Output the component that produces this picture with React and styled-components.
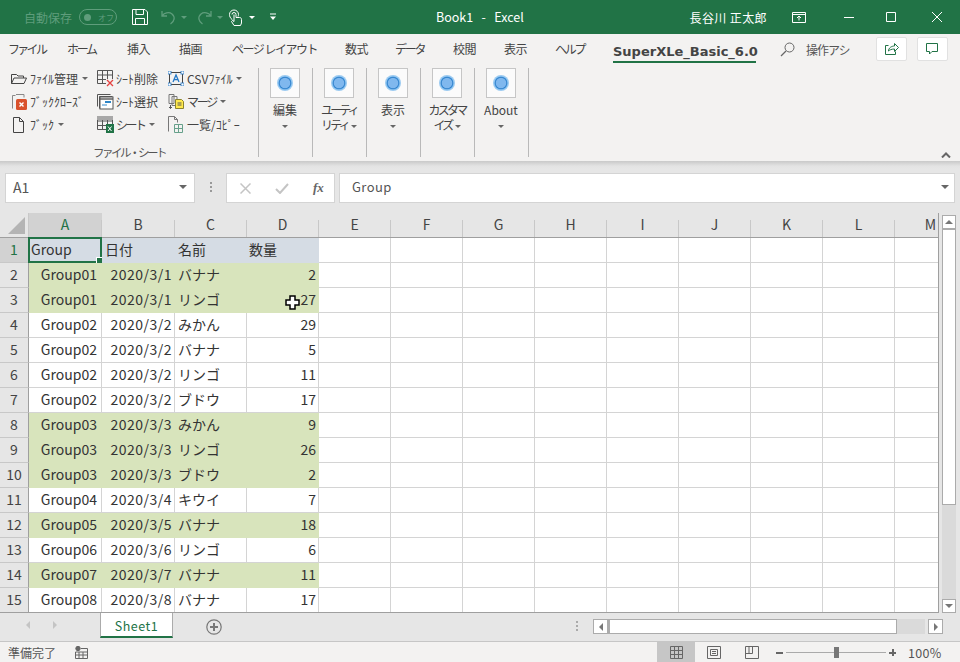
// App.jsx
import React from 'react';
import styled, { createGlobalStyle } from 'styled-components';

const JP = '"Noto Sans CJK JP", "Noto Sans", sans-serif';

const GlobalStyle = createGlobalStyle`
  html, body { margin: 0; padding: 0; background: #e6e6e6; }
  * { box-sizing: border-box; }
`;

const Window = styled.div`
  width: 960px;
  height: 662px;
  display: flex;
  flex-direction: column;
  overflow: hidden;
  font-family: ${JP};
  color: #444;
  position: relative;
`;

/* title bar */
const TitleBar = styled.div`
  height: 34px;
  flex: none;
  background: #217346;
  display: flex;
  align-items: center;
  color: #fff;
  font-size: 12px;
  position: relative;
`;

const AutoSave = styled.span`
  margin-left: 24px;
  width: 48px;
  color: #5f9d7c;
  font-size: 12px;
  white-space: nowrap;
`;

const Toggle = styled.span`
  width: 38px;
  height: 16px;
  margin-left: 7px;
  border: 1px solid #5f9d7c;
  border-radius: 8px;
  display: flex;
  align-items: center;
  color: #5f9d7c;
  font-size: 8px;
  padding-left: 4px;
  gap: 7px;
  &::before {
    content: '';
    width: 7px;
    height: 7px;
    border-radius: 50%;
    background: #5f9d7c;
  }
`;

const QuickIcon = styled.span`
  display: flex;
  margin-left: ${p => p.$ml}px;
  color: ${p => (p.$dim ? '#5f9d7c' : '#fff')};
`;

const TitleText = styled.span`
  position: absolute;
  left: 436px;
  top: 8px;
  font-size: 12.5px;
  line-height: 17px;
  white-space: pre;
`;

const UserName = styled.span`
  margin-left: auto;
  font-size: 12px;
  letter-spacing: 0.4px;
  white-space: nowrap;
`;

const WinButton = styled.span`
  display: flex;
  justify-content: center;
  width: 16px;
  margin-left: ${p => p.$ml}px;
  margin-right: ${p => p.$mr || 0}px;
`;

/* ribbon tabs */
const TabRow = styled.div`
  height: 30px;
  flex: none;
  background: #f3f2f1;
  display: flex;
  align-items: center;
  font-size: 12px;
  padding-left: 8px;
`;

const Tab = styled.span`
  width: ${p => p.$w}px;
  white-space: pre;
  letter-spacing: ${p => p.$ls || 0}px;
  line-height: 30px;
`;

const ActiveTab = styled.span`
  width: 143px;
  margin-right: 24px;
  height: 26px;
  margin-top: 2px;
  line-height: 30px;
  font-family: "DejaVu Sans", sans-serif;
  font-weight: 700;
  font-size: 13px;
  color: #444;
  border-bottom: 2px solid #217346;
  white-space: nowrap;
`;

const SearchHint = styled.span`
  width: 49px;
  margin-left: 11px;
  overflow: hidden;
  white-space: nowrap;
  letter-spacing: -1px;
  color: #555;
`;

const TabButton = styled.span`
  width: 31px;
  height: 24px;
  margin-left: ${p => p.$ml}px;
  background: #fff;
  border: 1px solid #e1e1e1;
  border-radius: 2px;
  display: flex;
  align-items: center;
  justify-content: center;
  color: #217346;
`;

/* ribbon body */
const Ribbon = styled.div`
  height: 97px;
  flex: none;
  background: #f3f2f1;
  display: flex;
  padding-top: 4px;
  position: relative;
`;

const FileGroup = styled.div`
  width: 259px;
  height: 89px;
  border-right: 1px solid #b9b9b9;
  display: flex;
  flex-direction: column;
  align-items: stretch;
`;

const SmallColumns = styled.div`
  display: flex;
  height: 69px;
`;

const SmallColumn = styled.div`
  width: ${p => p.$w}px;
  display: flex;
  flex-direction: column;
  padding-left: ${p => p.$pl}px;
`;

const SmallButton = styled.div`
  height: 23px;
  padding-bottom: 2px;
  display: flex;
  align-items: center;
  font-size: 12px;
  white-space: nowrap;
  color: #444;
  svg { flex: none; }
`;

const SmallLabel = styled.span`
  margin-left: ${p => p.$ml || 2}px;
  letter-spacing: ${p => p.$ls || 0}px;
`;

const Caret = styled.span`
  width: 0;
  height: 0;
  margin-left: ${p => (p.$ml === undefined ? 4 : p.$ml)}px;
  display: inline-block;
  vertical-align: middle;
  border-left: ${p => p.$size || 3}px solid transparent;
  border-right: ${p => p.$size || 3}px solid transparent;
  border-top: ${p => p.$size || 3}px solid ${p => p.$color || '#666'};
`;

const GroupLabel = styled.div`
  margin-top: 7px;
  text-align: center;
  font-size: 11.5px;
  letter-spacing: -2.5px;
  line-height: 16px;
  color: #555;
`;

const BigGroup = styled.div`
  width: 54px;
  height: 89px;
  border-right: 1px solid #b9b9b9;
  display: flex;
  flex-direction: column;
  align-items: center;
  padding-right: 1px;
`;

const BigIcon = styled.div`
  width: 30px;
  height: 30px;
  flex: none;
  background: #fbfbfb;
  border: 1px solid #c6c6c6;
  display: flex;
  align-items: center;
  justify-content: center;
`;

const BigLabel = styled.div`
  margin-top: 4px;
  font-size: 12px;
  line-height: 15px;
  text-align: center;
  white-space: nowrap;
  letter-spacing: ${p => p.$ls || 0}px;
`;

const Collapse = styled.span`
  position: absolute;
  right: 9px;
  bottom: 3px;
  display: flex;
  color: #666;
`;

/* formula bar */
const FormulaBar = styled.div`
  height: 52px;
  flex: none;
  display: flex;
  padding: 12px 5px 0;
  background: linear-gradient(#c9c9c9 0, #e3e3e3 5px, #e6e6e6 8px);
`;

const NameBox = styled.div`
  width: 190px;
  height: 30px;
  background: #fff;
  border: 1px solid #d4d4d4;
  display: flex;
  align-items: center;
  justify-content: space-between;
  padding: 0 7px 3px;
  font-size: 14px;
  color: #555;
`;

const Dots = styled.span`
  width: 2px;
  height: 10px;
  margin: 9px 14px 0 15px;
  background: repeating-linear-gradient(#999 0 2px, transparent 2px 4px);
`;

const FormulaButtons = styled.div`
  width: 109px;
  height: 30px;
  background: #fff;
  border: 1px solid #d4d4d4;
  display: flex;
  align-items: center;
  padding-left: 13px;
  gap: 24px;
`;

const FxLabel = styled.span`
  font-family: "Liberation Serif", serif;
  font-style: italic;
  font-weight: 700;
  font-size: 13px;
  color: #666;
`;

const FormulaInput = styled.div`
  width: 616px;
  height: 30px;
  margin-left: 4px;
  background: #fff;
  border: 1px solid #d4d4d4;
  display: flex;
  align-items: center;
  justify-content: space-between;
  padding: 0 5px 3px 12px;
  font-size: 13px;
  color: #555;
  letter-spacing: 0.4px;
`;

/* sheet */
const SheetArea = styled.div`
  height: 400px;
  flex: none;
  display: flex;
  background: #e6e6e6;
  overflow: hidden;
`;

const SheetGrid = styled.div`
  width: 939px;
  flex: none;
  overflow: hidden;
  background: #fff;
  border-right: 1px solid #9f9f9f;
  border-bottom: 1px solid #9f9f9f;
`;

const HeaderRow = styled.div`
  height: 25px;
  display: flex;
  background: #e6e6e6;
  border-bottom: 1px solid #9f9f9f;
`;

const Corner = styled.div`
  width: 29px;
  flex: none;
  display: flex;
  align-items: flex-end;
  justify-content: flex-end;
  padding: 0 3px 3px 0;
  border-right: 1px solid #c8c8c8;
`;

const ColHead = styled.div`
  width: ${p => p.$w}px;
  flex: none;
  text-align: center;
  font-size: 14px;
  line-height: 23px;
  background: ${p => (p.$on ? '#d2d2d2' : 'transparent')};
  color: ${p => (p.$on ? '#217346' : '#444')};
  border-right: 1px solid #c8c8c8;
  border-image: linear-gradient(transparent 30%, #c8c8c8 30%) 1;
`;

const SheetRow = styled.div`
  height: 25px;
  display: flex;
`;

const RowHead = styled.div`
  width: 29px;
  flex: none;
  text-align: center;
  font-size: 14px;
  line-height: 23px;
  background: ${p => (p.$on ? '#d2d2d2' : '#e6e6e6')};
  color: ${p => (p.$on ? '#217346' : '#444')};
  border-right: 1px solid #9f9f9f;
  border-bottom: 1px solid #c8c8c8;
`;

const Cell = styled.div`
  width: ${p => p.$w}px;
  flex: none;
  position: relative;
  font-size: 14px;
  line-height: 23px;
  padding: 0 ${p => p.$pr || 3}px 0 ${p => p.$pl || 3}px;
  white-space: nowrap;
  overflow: visible;
  letter-spacing: ${p => p.$ls || 0}px;
  text-align: ${p => p.$align || 'left'};
  color: #333;
  background: ${p => p.$bg || '#fff'};
  border-right: 1px solid ${p => (p.$bg ? 'transparent' : '#d4d4d4')};
  border-bottom: 1px solid ${p => (p.$bg ? 'transparent' : '#d4d4d4')};
`;

const Selection = styled.span`
  position: absolute;
  left: -1px;
  top: -1px;
  right: -1px;
  bottom: -1px;
  border: 2px solid #217346;
  &::after {
    content: '';
    position: absolute;
    right: -5px;
    bottom: -5px;
    width: 7px;
    height: 7px;
    background: #217346;
    border: 1px solid #fff;
  }
`;

const CursorMark = styled.span`
  position: absolute;
  left: 38px;
  top: 7px;
  display: flex;
`;

/* scroll bars */
const VScroll = styled.div`
  width: 21px;
  flex: none;
  padding: 2px 4px 0 3px;
  display: flex;
  flex-direction: column;
`;

const ScrollBtn = styled.div`
  width: ${p => p.$size || 14}px;
  height: ${p => p.$size || 14}px;
  flex: none;
  background: #fff;
  border: 1px solid #ababab;
  display: flex;
  align-items: center;
  justify-content: center;
`;

const VThumb = styled.div`
  height: 276px;
  flex: none;
  background: #fff;
  border: 1px solid #ababab;
`;

const VTrack = styled.div`
  flex: 1;
  background: #dadada;
`;

const Arrow = styled.span`
  width: 0;
  height: 0;
  border-style: solid;
  border-color: transparent;
  border-width: ${p => (p.$dir === 'up' ? '0 4px 4px' : p.$dir === 'down' ? '4px 4px 0' : '4px')};
  border-bottom-color: ${p => (p.$dir === 'up' ? '#777' : 'transparent')};
  border-top-color: ${p => (p.$dir === 'down' ? '#777' : 'transparent')};
  border-left-color: ${p => (p.$dir === 'right' ? '#777' : 'transparent')};
  border-right-color: ${p => (p.$dir === 'left' ? '#777' : 'transparent')};
  margin-left: ${p => (p.$dir === 'right' ? '4px' : 0)};
  margin-right: ${p => (p.$dir === 'left' ? '4px' : 0)};
`;

/* sheet tabs */
const SheetBar = styled.div`
  height: 28px;
  flex: none;
  display: flex;
  align-items: flex-start;
  background: #e6e6e6;
`;

const TabNav = styled.div`
  width: 100px;
  height: 24px;
  display: flex;
  align-items: center;
  padding-left: 26px;
  gap: 23px;
`;

const NavArrow = styled.span`
  width: 0;
  height: 0;
  border-style: solid;
  border-width: 4px 0;
  border-color: transparent;
  ${p => (p.$left
    ? 'border-right: 4px solid #c4c4c4;'
    : 'border-left: 4px solid #c4c4c4;')}
`;

const SheetTab = styled.div`
  width: 73px;
  height: 25px;
  background: #fff;
  border-left: 1px solid #ababab;
  border-right: 1px solid #ababab;
  border-bottom: 2px solid #217346;
  text-align: center;
  font-size: 12.5px;
  line-height: 25px;
  letter-spacing: 0.5px;
  color: #217346;
`;

const AddSheet = styled.span`
  display: flex;
  margin: 6px 0 0 33px;
`;

const TabDots = styled.span`
  width: 2px;
  height: 10px;
  margin: 8px 15px 0 354px;
  background: repeating-linear-gradient(#aaa 0 2px, transparent 2px 4px);
`;

const HScroll = styled.div`
  display: flex;
  margin-top: 6px;
  height: 15px;
`;

const HThumb = styled.div`
  width: 289px;
  height: 15px;
  background: #fff;
  border: 1px solid #ababab;
  border-left-width: 2px;
`;

const HTrack = styled.div`
  width: 28px;
  height: 15px;
  background: #dadada;
  margin-right: 3px;
`;

/* status bar */
const StatusBar = styled.div`
  flex: 1;
  display: flex;
  align-items: center;
  background: #f3f2f1;
  border-top: 1px solid #c6c6c6;
  font-size: 12px;
  color: #555;
`;

const StatusText = styled.span`
  margin-left: 8px;
  width: 48px;
`;

const StatusIcon = styled.span`
  display: flex;
  margin-left: ${p => p.$ml}px;
`;

const ViewBtn = styled.span`
  width: 38px;
  height: 21px;
  display: flex;
  align-items: center;
  justify-content: center;
  background: ${p => (p.$on ? '#c6c6c6' : 'transparent')};
`;

const ZoomSign = styled.span`
  width: 7px;
  height: 2px;
  margin-left: ${p => p.$ml}px;
  background: #666;
  position: relative;
  ${p => p.$plus && `
    &::after {
      content: '';
      position: absolute;
      left: 2.5px;
      top: -2.5px;
      width: 2px;
      height: 7px;
      background: #666;
    }
  `}
`;

const Slider = styled.span`
  width: 100px;
  height: 1px;
  margin-left: 3px;
  background: #aaa;
  display: flex;
  align-items: center;
  justify-content: center;
  &::after {
    content: '';
    width: 5px;
    height: 11px;
    background: #777;
    flex: none;
  }
`;

const Percent = styled.span`
  margin-left: 12px;
  font-size: 12.5px;
  letter-spacing: 0.3px;
`;

/* icons */
const Stroke = ({ w = 16, h = 16, children, color = 'currentColor', sw = 1 }) => (
  <svg width={w} height={h} viewBox={`0 0 ${w} ${h}`} fill="none" stroke={color} strokeWidth={sw}>
    {children}
  </svg>
);

const FolderIcon = () => (
  <Stroke w={16} h={14} color="#444">
    <path d="M.5 11.5V2.5h5l1.5 1.5h5.5v2M.5 11.5l2.5-5.5h12.5l-2.5 5.5z" />
  </Stroke>
);

const CloseBookIcon = () => (
  <Stroke w={18} h={18} color="#888">
    <path d="M1.5 15.5V2.5h3M5 1.5h8v3" />
    <rect x="5" y="6" width="11" height="11" rx="1.5" fill="#d9512c" stroke="none" />
    <path d="M8.5 9.5l4 4M12.5 9.5l-4 4" stroke="#fff" strokeWidth="1.4" />
  </Stroke>
);

const PageIcon = () => (
  <Stroke w={14} h={16} color="#444">
    <path d="M2.5.5h6l4 4v11h-10zM8.5.5v4h4" />
  </Stroke>
);

const GridLines = ({ color = '#555' }) => (
  <path d="M.5.5h15v13H.5zM.5 5h15M.5 9.5h15M5.5.5v13M10.5.5v13" stroke={color} />
);

const SheetDeleteIcon = () => (
  <Stroke w={17} h={17}>
    <GridLines />
    <rect x="9" y="9" width="8" height="8" fill="#f3f2f1" stroke="none" />
    <path d="M10 10l6 6M16 10l-6 6" stroke="#e5413f" strokeWidth="1.3" />
  </Stroke>
);

const SheetSelectIcon = () => (
  <Stroke w={17} h={16} color="#555">
    <path d="M.5 12.5V.5h13M2.5 14.5V2.5h13" />
    <rect x="3" y="3" width="13" height="12" fill="#fff" />
    <path d="M3 5h13" stroke="#555" strokeWidth="1.4" />
    <rect x="8" y="7" width="6" height="2" fill="#2f86c7" stroke="none" />
    <rect x="5" y="10" width="5" height="2" fill="#9cc6e6" stroke="none" />
  </Stroke>
);

const SheetAddIcon = () => (
  <Stroke w={17} h={17}>
    <GridLines />
    <rect x="0" y="0" width="16" height="4" fill="#a8a8a8" stroke="none" />
    <rect x="9" y="8" width="8" height="9" fill="#217346" stroke="none" />
    <path d="M11 10.5l3.5 4.5M14.5 10.5L11 15" stroke="#fff" />
  </Stroke>
);

const CsvIcon = () => (
  <svg width="16" height="15" viewBox="0 0 16 15" fill="none">
    <rect x="1.5" y="1.5" width="13" height="12" stroke="#444" />
    <path d="M5 11l3-7 3 7M6 8.7h4" stroke="#2378c7" strokeWidth="1.3" />
    {[[0, 0], [13, 0], [0, 12], [13, 12]].map(([x, y]) => (
      <rect key={`${x}-${y}`} x={x} y={y} width="3" height="3" fill="#fff" stroke="#2378c7" strokeWidth=".8" />
    ))}
  </svg>
);

const MergeIcon = () => (
  <Stroke w={17} h={17} color="#777">
    <path d="M1 1.5h5v9H1zM4 3.5h5v9H4z" fill="#f3f2f1" />
    <path d="M7.5 6.5h6l2 2v7h-8z" fill="#ffe94d" stroke="#8a8330" />
    <path d="M9.5 10h4M9.5 12h4" stroke="#555" />
    <path d="M2.5 12v3.500M1 14l1.500 1.500L4 14" stroke="#555" />
  </Stroke>
);

const ListIcon = () => (
  <Stroke w={16} h={17} color="#777">
    <path d="M.5 15.500V.5h6l3 3v3" />
    <path d="M6.500.5v3h3" />
    <path d="M6.500 8.500h8v8h-8zM6.500 12.500h8M10.500 8.500v8" stroke="#66a08a" />
  </Stroke>
);

const CircleIcon = () => (
  <svg width="18" height="18" viewBox="0 0 18 18">
    <circle cx="9" cy="9" r="8" fill="#9ccbf1" />
    <circle cx="9" cy="9" r="6.600" fill="#4f9fe3" />
    <circle cx="9" cy="9" r="6" fill="#2f7fc8" />
    <circle cx="9" cy="9" r="5.300" fill="#80b8ee" />
  </svg>
);

const rows = [
  ['Group01', '2020/3/1', 'バナナ', 2, 1],
  ['Group01', '2020/3/1', 'リンゴ', 27, 1],
  ['Group02', '2020/3/2', 'みかん', 29, 0],
  ['Group02', '2020/3/2', 'バナナ', 5, 0],
  ['Group02', '2020/3/2', 'リンゴ', 11, 0],
  ['Group02', '2020/3/2', 'ブドウ', 17, 0],
  ['Group03', '2020/3/3', 'みかん', 9, 1],
  ['Group03', '2020/3/3', 'リンゴ', 26, 1],
  ['Group03', '2020/3/3', 'ブドウ', 2, 1],
  ['Group04', '2020/3/4', 'キウイ', 7, 0],
  ['Group05', '2020/3/5', 'バナナ', 18, 1],
  ['Group06', '2020/3/6', 'リンゴ', 6, 0],
  ['Group07', '2020/3/7', 'バナナ', 11, 1],
  ['Group08', '2020/3/8', 'バナナ', 17, 0],
];

const colWidths = [73, 73, 72, 72];
const restCols = ['E', 'F', 'G', 'H', 'I', 'J', 'K', 'L', 'M'];

const tabs = [
  ['ファイル', 59, -2.7],
  ['ホーム', 60, -2.3],
  ['挿入', 52, -.5],
  ['描画', 53, -.5],
  ['ページ レイアウト', 113, -1.5],
  ['数式', 50, -.5],
  ['データ', 58, -2.3],
  ['校閲', 51, -.5],
  ['表示', 51, -.5],
  ['ヘルプ', 58, -2.3],
];

const bigGroups = [
  { label: '編集' },
  { label: 'ユーティ', second: 'リティ' },
  { label: '表示' },
  { label: 'カスタマ', second: 'イズ' },
  { label: 'About' },
];

const App = () => (
  <Window>
    <GlobalStyle />
    <TitleBar>
      <AutoSave>自動保存</AutoSave>
      <Toggle>オフ</Toggle>
      <QuickIcon $ml={15}>
        <Stroke w={16} h={16} color="#fff">
          <path d="M.5.5h12.500l2.500 2.500v12.500H.5zM4 .5v5h7.500v-5M3.500 15.500v-6h9v6" />
        </Stroke>
      </QuickIcon>
      <QuickIcon $ml={13} $dim>
        <Stroke w={15} h={15} sw={1.300}>
          <path d="M1 1v5h5M1.500 5.500C3 3 8 1.500 11 4c3.500 3 2.500 7.500-1.500 10" />
        </Stroke>
      </QuickIcon>
      <Caret $ml={5} $color="#5f9d7c" />
      <QuickIcon $ml={10} $dim>
        <Stroke w={15} h={15} sw={1.300}>
          <path d="M14 1v5H9M13.500 5.500C12 3 7 1.500 4 4c-3.500 3-2.500 7.500 1.500 10" />
        </Stroke>
      </QuickIcon>
      <Caret $ml={5} $color="#5f9d7c" />
      <QuickIcon $ml={6}>
        <Stroke w={13} h={17} color="#fff">
          <path d="M3.500 11C1 9 .5 7 .5 5.500a4.500 4.500 0 0 1 9 0c0 .8-.2 1.300-.5 2" />
          <path d="M3 5.500a2 2 0 0 1 4 0v3h3.500c1.500 0 2 1 2 2V14l-1 2.500H5L2.500 12.500 3.500 11.500 5 12.500V5.500" fill="#217346" />
        </Stroke>
      </QuickIcon>
      <Caret $ml={7} $color="#fff" />
      <QuickIcon $ml={14}>
        <svg width="8" height="8" viewBox="0 0 8 8">
          <path d="M1 1h6" stroke="#fff" />
          <path d="M1 3.500h6l-3 3.500z" fill="#fff" />
        </svg>
      </QuickIcon>
      <TitleText>{'Book1   -   Excel'}</TitleText>
      <UserName>長谷川 正太郎</UserName>
      <WinButton $ml={24}>
        <Stroke w={14} h={11} color="#fff">
          <path d="M.5.5h13v10H.5zM.5 2.500h13M7 8.500V4.500M5 6l2-2 2 2" />
        </Stroke>
      </WinButton>
      <WinButton $ml={34}>
        <Stroke w={10} h={10} color="#fff"><path d="M0 5.500h10" /></Stroke>
      </WinButton>
      <WinButton $ml={26}>
        <Stroke w={10} h={10} color="#fff"><path d="M.5.5h9v9h-9z" /></Stroke>
      </WinButton>
      <WinButton $ml={30} $mr={15}>
        <Stroke w={10} h={10} color="#fff"><path d="M0 0l10 10M10 0L0 10" /></Stroke>
      </WinButton>
    </TitleBar>

    <TabRow>
      {tabs.map(([name, w, ls]) => (
        <Tab key={name} $w={w} $ls={ls}>{name}</Tab>
      ))}
      <ActiveTab>SuperXLe_Basic_6.0</ActiveTab>
      <Stroke w={15} h={15} color="#666">
        <circle cx="9.500" cy="5.500" r="4.500" />
        <path d="M6 9l-5 5" strokeWidth="1.300" />
      </Stroke>
      <SearchHint>操作アシ</SearchHint>
      <TabButton $ml={21}>
        <Stroke w={14} h={14} color="#217346">
          <path d="M3.500 3.500H.5v9h10v-3M3.500 9c0-3 3-5 6-5V1.500l4 4-4 4V7c-3 0-5 1-6 2z" />
        </Stroke>
      </TabButton>
      <TabButton $ml={10}>
        <Stroke w={14} h={13} color="#217346">
          <path d="M.5.5h11v8H6L3.500 11V8.500h-3z" />
        </Stroke>
      </TabButton>
    </TabRow>

    <Ribbon>
      <FileGroup>
        <SmallColumns>
          <SmallColumn $w={97} $pl={11}>
            <SmallButton><FolderIcon /><SmallLabel $ml={3}>ﾌｧｲﾙ管理</SmallLabel><Caret /></SmallButton>
            <SmallButton><CloseBookIcon /><SmallLabel $ml={1}>ﾌﾞｯｸｸﾛｰｽﾞ</SmallLabel></SmallButton>
            <SmallButton><PageIcon /><SmallLabel $ml={5}>ﾌﾞｯｸ</SmallLabel><Caret /></SmallButton>
          </SmallColumn>
          <SmallColumn $w={71} $pl={0}>
            <SmallButton><SheetDeleteIcon /><SmallLabel>ｼｰﾄ削除</SmallLabel></SmallButton>
            <SmallButton><SheetSelectIcon /><SmallLabel>ｼｰﾄ選択</SmallLabel></SmallButton>
            <SmallButton><SheetAddIcon /><SmallLabel $ls={-2.5}>シート</SmallLabel><Caret /></SmallButton>
          </SmallColumn>
          <SmallColumn $w={90} $pl={0}>
            <SmallButton><CsvIcon /><SmallLabel $ml={3}>CSVﾌｧｲﾙ</SmallLabel><Caret /></SmallButton>
            <SmallButton><MergeIcon /><SmallLabel $ls={-2.3}>マージ</SmallLabel><Caret /></SmallButton>
            <SmallButton><ListIcon /><SmallLabel $ml={3}>一覧/ｺﾋﾟｰ</SmallLabel></SmallButton>
          </SmallColumn>
        </SmallColumns>
        <GroupLabel>ファイル・シート</GroupLabel>
      </FileGroup>
      {bigGroups.map(g => (
        <BigGroup key={g.label}>
          <BigIcon><CircleIcon /></BigIcon>
          <BigLabel $ls={g.second ? -2.8 : 0}>
            {g.label}
            <br />
            {g.second}
            <Caret $ml={g.second ? 3 : 0} />
          </BigLabel>
        </BigGroup>
      ))}
      <Collapse>
        <Stroke w={10} h={6} sw={2} color="#666"><path d="M1 5.500l4-4 4 4" /></Stroke>
      </Collapse>
    </Ribbon>

    <FormulaBar>
      <NameBox>A1<Caret $size={4} $ml={0} /></NameBox>
      <Dots />
      <FormulaButtons>
        <Stroke w={11} h={11} color="#c4c4c4" sw={1.500}><path d="M.5.5l10 10M10.500.5l-10 10" /></Stroke>
        <Stroke w={14} h={11} color="#c4c4c4" sw={2}><path d="M1 6l4 4 8-9" /></Stroke>
        <FxLabel>fx</FxLabel>
      </FormulaButtons>
      <FormulaInput>Group<Caret $size={4} $ml={0} /></FormulaInput>
    </FormulaBar>

    <SheetArea>
      <SheetGrid>
        <HeaderRow>
          <Corner>
            <svg width="17" height="17" viewBox="0 0 17 17"><path d="M17 0v17H0z" fill="#b4b4b4" /></svg>
          </Corner>
          {['A', 'B', 'C', 'D'].map((c, i) => (
            <ColHead key={c} $w={colWidths[i]} $on={i === 0}>{c}</ColHead>
          ))}
          {restCols.map(c => <ColHead key={c} $w={72}>{c}</ColHead>)}
        </HeaderRow>
        <SheetRow>
          <RowHead $on>1</RowHead>
          <Cell $w={73} $bg="#d5dce4" $pl={2}>Group<Selection /></Cell>
          <Cell $w={73} $bg="#d5dce4">日付</Cell>
          <Cell $w={72} $bg="#d5dce4">名前</Cell>
          <Cell $w={72} $bg="#d5dce4" $pl={2}>数量</Cell>
          {restCols.map(c => <Cell key={c} $w={72} />)}
        </SheetRow>
        {rows.map(([group, date, name, qty, hit], i) => {
          const bg = hit ? '#d8e4bc' : undefined;
          return (
            <SheetRow key={i}>
              <RowHead>{i + 2}</RowHead>
              <Cell $w={73} $bg={bg} $align="right" $pr={4}>{group}</Cell>
              <Cell $w={73} $bg={bg} $align="right" $pr={2} $ls={0.5}>{date}</Cell>
              <Cell $w={72} $bg={bg}>{name}</Cell>
              <Cell $w={72} $bg={bg} $align="right" $pr={2}>
                {qty}
                {i === 1 && (
                  <CursorMark>
                    <svg width="15" height="15" viewBox="0 0 15 15">
                      <path d="M5 1h5v4h4v5h-4v4H5v-4H1V5h4z" fill="#fff" stroke="#000" strokeWidth="1.500" />
                    </svg>
                  </CursorMark>
                )}
              </Cell>
              {restCols.map(c => <Cell key={c} $w={72} />)}
            </SheetRow>
          );
        })}
      </SheetGrid>
      <VScroll>
        <ScrollBtn><Arrow $dir="up" /></ScrollBtn>
        <VThumb />
        <VTrack />
        <ScrollBtn><Arrow $dir="down" /></ScrollBtn>
      </VScroll>
    </SheetArea>

    <SheetBar>
      <TabNav>
        <NavArrow $left />
        <NavArrow />
      </TabNav>
      <SheetTab>Sheet1</SheetTab>
      <AddSheet>
        <Stroke w={16} h={16} color="#777" sw={1.200}>
          <circle cx="8" cy="8" r="7.200" />
          <path d="M8 4v8M4 8h8" strokeWidth="2" />
        </Stroke>
      </AddSheet>
      <TabDots />
      <HScroll>
        <ScrollBtn $size={15}><Arrow $dir="left" /></ScrollBtn>
        <HThumb />
        <HTrack />
        <ScrollBtn $size={15}><Arrow $dir="right" /></ScrollBtn>
      </HScroll>
    </SheetBar>

    <StatusBar>
      <StatusText>準備完了</StatusText>
      <StatusIcon $ml={19}>
        <Stroke w={13} h={13} color="#666">
          <circle cx="3" cy="2.500" r="2.200" fill="#666" />
          <path d="M6 2.500h6.500v10H.5V6h12M.5 9h12M4 6v6.500M8 6v6.500" />
        </Stroke>
      </StatusIcon>
      <StatusIcon $ml={569}>
        <ViewBtn $on>
          <Stroke w={13} h={13} color="#666">
            <path d="M.5.5h12v12H.5zM.5 4.500h12M.5 8.500h12M4.500.5v12M8.500.5v12" />
          </Stroke>
        </ViewBtn>
        <ViewBtn>
          <Stroke w={14} h={13} color="#666">
            <path d="M.5.5h13v12H.5zM3.500 3.500h7v6h-7zM5 5.500h4M5 7.500h4" />
          </Stroke>
        </ViewBtn>
        <ViewBtn>
          <Stroke w={14} h={13} color="#666">
            <path d="M.5.5h13v12H.5zM.5 7.500h7V.5M4 .5v7" />
          </Stroke>
        </ViewBtn>
      </StatusIcon>
      <ZoomSign $ml={5} />
      <Slider />
      <ZoomSign $ml={3} $plus />
      <Percent>100%</Percent>
    </StatusBar>
  </Window>
);

export default App;
